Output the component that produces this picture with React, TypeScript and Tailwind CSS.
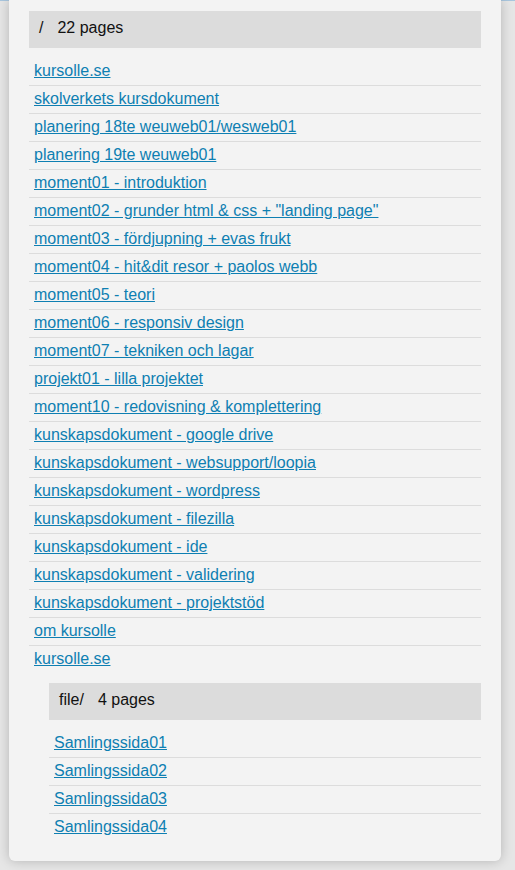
import React from "react";

const mainLinks = [
  "kursolle.se",
  "skolverkets kursdokument",
  "planering 18te weuweb01/wesweb01",
  "planering 19te weuweb01",
  "moment01 - introduktion",
  'moment02 - grunder html & css + "landing page"',
  "moment03 - fördjupning + evas frukt",
  "moment04 - hit&dit resor + paolos webb",
  "moment05 - teori",
  "moment06 - responsiv design",
  "moment07 - tekniken och lagar",
  "projekt01 - lilla projektet",
  "moment10 - redovisning & komplettering",
  "kunskapsdokument - google drive",
  "kunskapsdokument - websupport/loopia",
  "kunskapsdokument - wordpress",
  "kunskapsdokument - filezilla",
  "kunskapsdokument - ide",
  "kunskapsdokument - validering",
  "kunskapsdokument - projektstöd",
  "om kursolle",
  "kursolle.se",
];

const fileLinks = ["Samlingssida01", "Samlingssida02", "Samlingssida03", "Samlingssida04"];

function LinkList({ items }: { items: string[] }) {
  return (
    <ul className="mt-[10px]">
      {items.map((t, i) => (
        <li
          key={i}
          className={
            i < items.length - 1
              ? "pl-[5px] pt-[4px] pb-[5px] leading-[18px] border-b border-[#dcdcdc]"
              : "pl-[5px] pt-[4px] pb-[5px] leading-[18px]"
          }
        >
          <a href="#" className="text-[#0e7fb2] underline">
            {t}
          </a>
        </li>
      ))}
    </ul>
  );
}

function Header({ path, count }: { path: string; count: string }) {
  return (
    <div className="bg-[#dcdcdc] pl-[10px] pt-[8px] pb-[11px] leading-[18px] text-[#111]">
      <span>{path}</span>
      <span className="ml-[14px]">{count}</span>
    </div>
  );
}

export default function App() {
  return (
    <div
      className="min-h-[870px] bg-[#e6e6e6] border-t border-[#a9c6de] text-[16px]"
      style={{ fontFamily: '"Liberation Sans", Arial, sans-serif' }}
    >
      <div className="relative -mt-px ml-[9px] w-[492px] bg-[#f3f3f3] rounded-b-[6px] shadow-[0_0_12px_rgba(0,0,0,0.22)] px-[20px] pt-[11px] pb-[20px]">
        <Header path="/" count="22 pages" />
        <LinkList items={mainLinks} />
        <div className="ml-[20px] mt-[10px]">
          <Header path="file/" count="4 pages" />
          <LinkList items={fileLinks} />
        </div>
      </div>
    </div>
  );
}
